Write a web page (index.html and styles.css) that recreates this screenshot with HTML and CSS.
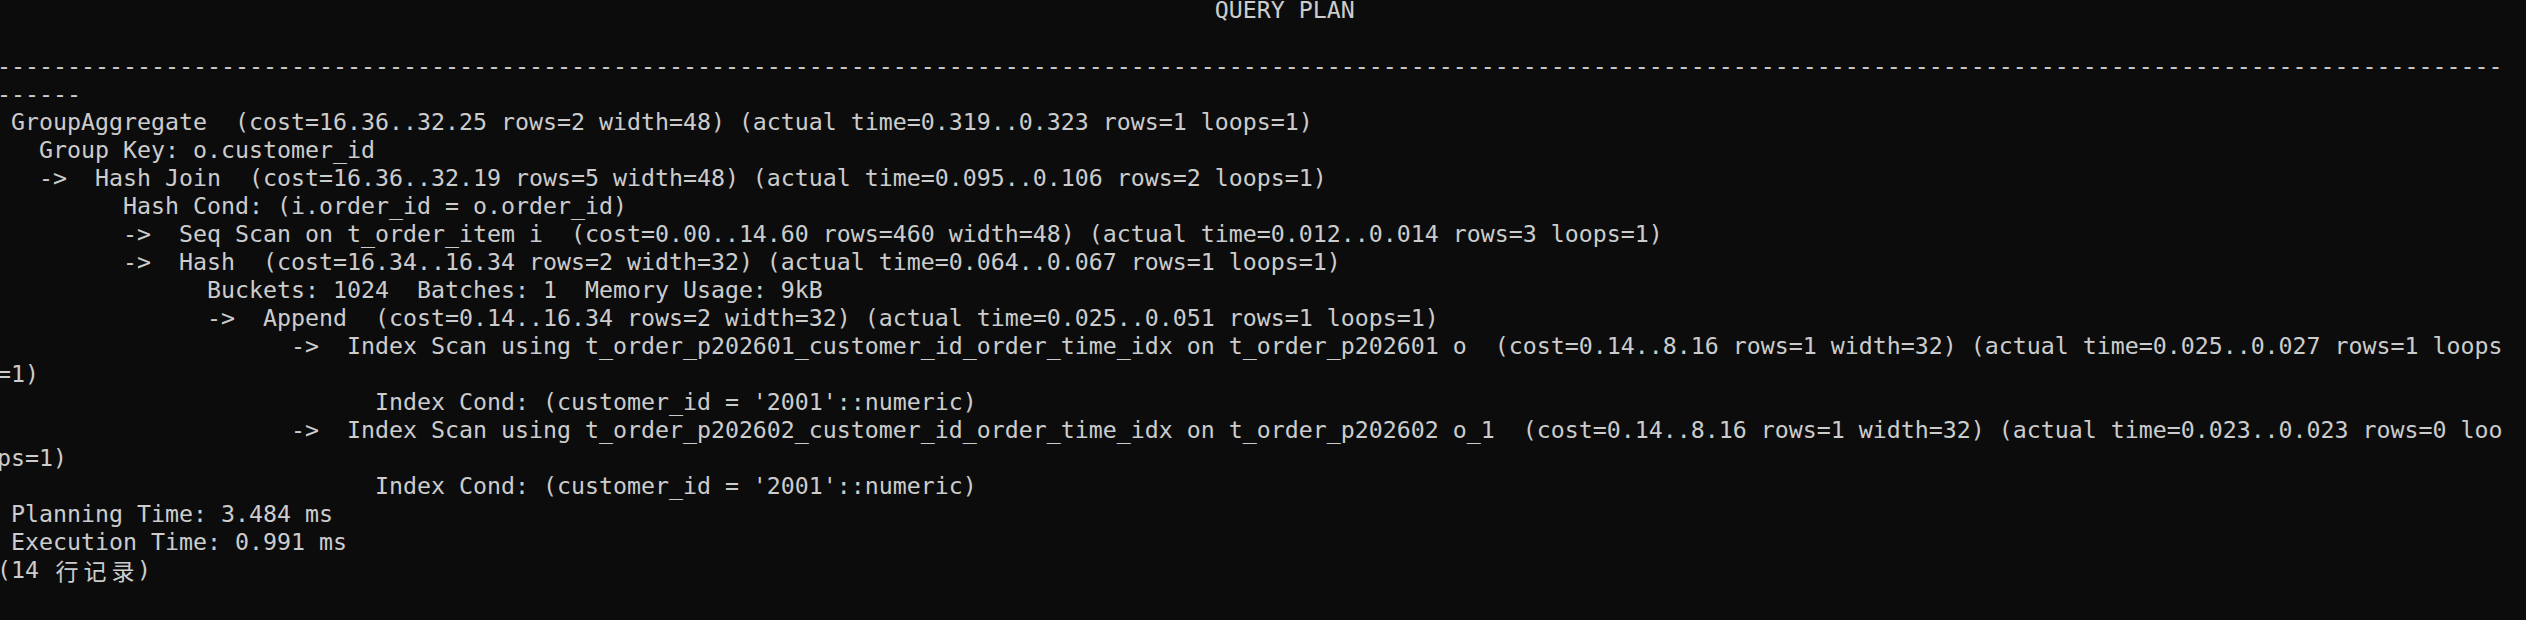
FILE: index.html
```html
<!DOCTYPE html>
<html lang="zh-CN">
<head>
<meta charset="utf-8">
<title>QUERY PLAN</title>
<link rel="stylesheet" href="styles.css">
</head>
<body>
<div class="term">
<div class="ln">                                                                                       QUERY PLAN</div>
<div class="ln"></div>
<div class="ln">-----------------------------------------------------------------------------------------------------------------------------------------------------------------------------------</div>
<div class="ln">------</div>
<div class="ln"> GroupAggregate  (cost=16.36..32.25 rows=2 width=48) (actual time=0.319..0.323 rows=1 loops=1)</div>
<div class="ln">   Group Key: o.customer_id</div>
<div class="ln">   -&gt;  Hash Join  (cost=16.36..32.19 rows=5 width=48) (actual time=0.095..0.106 rows=2 loops=1)</div>
<div class="ln">         Hash Cond: (i.order_id = o.order_id)</div>
<div class="ln">         -&gt;  Seq Scan on t_order_item i  (cost=0.00..14.60 rows=460 width=48) (actual time=0.012..0.014 rows=3 loops=1)</div>
<div class="ln">         -&gt;  Hash  (cost=16.34..16.34 rows=2 width=32) (actual time=0.064..0.067 rows=1 loops=1)</div>
<div class="ln">               Buckets: 1024  Batches: 1  Memory Usage: 9kB</div>
<div class="ln">               -&gt;  Append  (cost=0.14..16.34 rows=2 width=32) (actual time=0.025..0.051 rows=1 loops=1)</div>
<div class="ln">                     -&gt;  Index Scan using t_order_p202601_customer_id_order_time_idx on t_order_p202601 o  (cost=0.14..8.16 rows=1 width=32) (actual time=0.025..0.027 rows=1 loops</div>
<div class="ln">=1)</div>
<div class="ln">                           Index Cond: (customer_id = '2001'::numeric)</div>
<div class="ln">                     -&gt;  Index Scan using t_order_p202602_customer_id_order_time_idx on t_order_p202602 o_1  (cost=0.14..8.16 rows=1 width=32) (actual time=0.023..0.023 rows=0 loo</div>
<div class="ln">ps=1)</div>
<div class="ln">                           Index Cond: (customer_id = '2001'::numeric)</div>
<div class="ln"> Planning Time: 3.484 ms</div>
<div class="ln"> Execution Time: 0.991 ms</div>
<div class="ln">(14 <span class="wide">行</span><span class="wide">记</span><span class="wide">录</span>)</div>
</div>
</body>
</html>
```

FILE: styles.css
```css
html, body {
  margin: 0;
  padding: 0;
  background: #0c0c0c;
  overflow: hidden;
}

.term {
  margin: -4.5px 0 0 -3px;
  font-family: "DejaVu Sans Mono", "Noto Sans CJK SC", monospace;
  font-size: 23.254px;
  line-height: 28px;
  color: #cccccc;
}

.ln {
  height: 28px;
  white-space: pre;
}

.wide {
  display: inline-block;
  width: 28px;
  height: 28px;
  text-align: center;
  font-family: "Noto Sans CJK SC", "DejaVu Sans Mono", sans-serif;
  font-size: 23px;
  line-height: 28px;
  vertical-align: top;
}
```
